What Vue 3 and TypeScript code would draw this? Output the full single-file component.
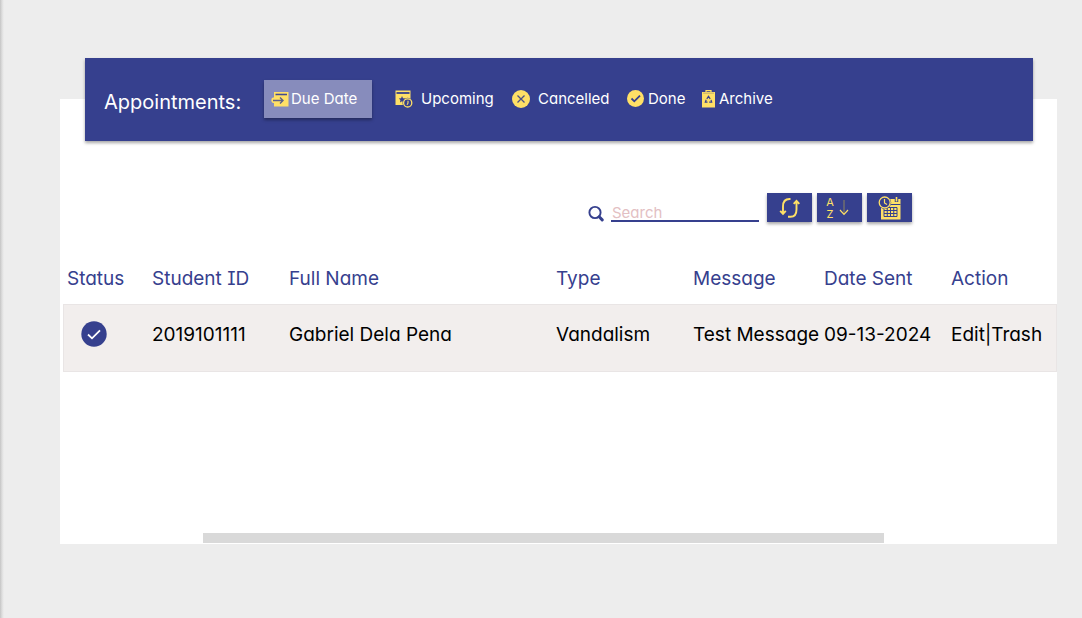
<script setup lang="ts">
import { ref } from 'vue'

type TabId = 'due' | 'upcoming' | 'cancelled' | 'done' | 'archive'

interface Appointment {
  studentId: string
  name: string
  type: string
  message: string
  date: string
}

const tabs: { id: TabId; label: string }[] = [
  { id: 'due', label: 'Due Date' },
  { id: 'upcoming', label: 'Upcoming' },
  { id: 'cancelled', label: 'Cancelled' },
  { id: 'done', label: 'Done' },
  { id: 'archive', label: 'Archive' },
]

const active = ref<TabId>('due')
const query = ref('')

const rows: Appointment[] = [
  {
    studentId: '2019101111',
    name: 'Gabriel Dela Pena',
    type: 'Vandalism',
    message: 'Test Message',
    date: '09-13-2024',
  },
]
</script>

<template>
  <main class="page">
    <section class="card">
      <header class="banner">
        <h1 class="title">Appointments:</h1>
        <nav class="tabs" aria-label="Appointment status">
          <button
            v-for="tab in tabs"
            :key="tab.id"
            type="button"
            :class="['tab', tab.id, { active: active === tab.id }]"
            @click="active = tab.id"
          >
            <svg v-if="tab.id === 'due'" width="18" height="16" viewBox="0 0 18 16" aria-hidden="true">
              <path d="M3 1H17.500V15.500H3Z" fill="#ffe066" />
              <path d="M4.500 3.500H16" stroke="#434b91" stroke-width="1.600" />
              <path d="M2 6.500H6.500L5.500 4.800H9.500L13.500 9.500L9.500 14H6.500V12H2Q.3 12 .3 9.300Q.3 6.500 2 6.500Z" fill="#ffe066" />
              <path d="M2 9.500H12M9 6.500L12 9.500L9 12.500" fill="none" stroke="#5d6188" stroke-width="1.400" />
            </svg>
            <svg v-else-if="tab.id === 'upcoming'" width="18" height="18" viewBox="0 0 18 18" aria-hidden="true">
              <path d="M.5 .5H15.500V15H.5Z" fill="#ffe066" />
              <path d="M1.500 3H14.500" stroke="#36408e" stroke-width="1.800" />
              <path d="M7 6L8 8.200L10.500 8.500L8.700 10L9 12.500L7 11.200L5 12.500L5.400 10L3.800 8.500L6.100 8.200Z" fill="#36408e" />
              <circle cx="12.700" cy="12.900" r="5.200" fill="#36408e" />
              <circle cx="12.700" cy="12.900" r="4.100" fill="none" stroke="#ffe066" stroke-width="1.300" />
              <path d="M13 10.800V13.200L12 14.700" fill="none" stroke="#ffe066" stroke-width="1.100" />
            </svg>
            <svg v-else-if="tab.id === 'cancelled'" width="18" height="18" viewBox="0 0 18 18" aria-hidden="true">
              <circle cx="9" cy="9" r="9" fill="#ffe066" />
              <path d="M5.500 5.500L12.500 12.500M12.500 5.500L5.500 12.500" stroke="#4c5184" stroke-width="1.300" />
            </svg>
            <svg v-else-if="tab.id === 'done'" width="17" height="17" viewBox="0 0 17 17" aria-hidden="true">
              <circle cx="8.500" cy="8.500" r="8.500" fill="#ffe066" />
              <path d="M4.500 8.500L7.300 11.300L13 5.600" fill="none" stroke="#36408e" stroke-width="1.800" />
            </svg>
            <svg v-else width="13" height="18" viewBox="0 0 13 18" aria-hidden="true">
              <path d="M0 2H13V17.500H0Z" fill="#ffe066" />
              <path d="M4 2.500V.7H9V2.500" fill="none" stroke="#ffe066" stroke-width="1.200" />
              <path d="M1 3.200H12" stroke="#b5a46f" stroke-width=".8" />
              <path d="M4.800 8.800L6.500 6.300L8.200 8.800M9 9.900L9.700 12.200H7.200M5.500 12.200H3.300L4.200 9.800" fill="none" stroke="#36408e" stroke-width="1.200" />
            </svg>
            <span>{{ tab.label }}</span>
          </button>
        </nav>
      </header>

      <div class="toolbar">
        <label class="search">
          <svg width="16" height="17" viewBox="0 0 16 17" aria-hidden="true">
            <circle cx="7" cy="7.500" r="5.600" fill="none" stroke="#36408e" stroke-width="1.900" />
            <path d="M11.200 11.800L14.200 14.900" stroke="#36408e" stroke-width="3" stroke-linecap="round" />
          </svg>
          <input v-model="query" type="text" placeholder="Search" aria-label="Search" />
        </label>
        <button class="tool" type="button" aria-label="Refresh">
          <svg width="22" height="22" viewBox="0 0 22 22" fill="none" stroke="#ffe066" stroke-width="1.900" aria-hidden="true">
            <path d="M11.500 2H10.500C6 2 4 5 4 9.500V16.500M1.200 13.800L4 16.800L6.800 13.800" />
            <path d="M9 19.800H11.500C15.500 19.800 17.500 17 17.500 12.500V4M14.700 6.800L17.500 3.800L20.300 6.800" />
          </svg>
        </button>
        <button class="tool sort" type="button" aria-label="Sort A to Z">
          <span class="letters"><span>A</span><span>Z</span></span>
          <svg width="10" height="16" viewBox="0 0 10 16" fill="none" aria-hidden="true">
            <path d="M5 0V14" stroke="#8d855f" stroke-width="1" />
            <path d="M1 10L5 14.300L9 10" stroke="#ffe066" stroke-width="1.200" />
          </svg>
        </button>
        <button class="tool" type="button" aria-label="Filter by date">
          <svg width="24" height="24" viewBox="0 0 24 24" aria-hidden="true">
            <path d="M3 3H22.500V23.500H3Z" fill="#ffe066" />
            <path d="M3 8.500H22.500" stroke="#36408e" stroke-width="1" />
            <path d="M18.500 1V6" stroke="#36408e" stroke-width="3.500" />
            <path d="M18.500 1V5.500" stroke="#ffe066" stroke-width="1.600" />
            <path d="M6 11.500H19V20.500H6ZM6 14.500H19M6 17.500H19M9.250 11.500V20.500M12.500 11.500V20.500M15.750 11.500V20.500" fill="none" stroke="#36408e" stroke-width="1" />
            <circle cx="6.700" cy="6.500" r="6.500" fill="#36408e" />
            <circle cx="6.700" cy="6.500" r="5.500" fill="none" stroke="#ffe066" stroke-width="1.300" />
            <path d="M6.500 3V7L9 8.500" fill="none" stroke="#ffe066" stroke-width="1.200" />
          </svg>
        </button>
      </div>

      <table class="list">
        <colgroup>
          <col class="c-status" /><col class="c-id" /><col /><col class="c-type" />
          <col class="c-message" /><col class="c-date" /><col class="c-action" />
        </colgroup>
        <thead>
          <tr>
            <th scope="col">Status</th>
            <th scope="col">Student ID</th>
            <th scope="col">Full Name</th>
            <th scope="col">Type</th>
            <th scope="col">Message</th>
            <th scope="col">Date Sent</th>
            <th scope="col">Action</th>
          </tr>
        </thead>
        <tbody>
          <tr v-for="row in rows" :key="row.studentId">
            <td class="status">
              <svg width="26" height="26" viewBox="0 0 26 26" role="img" aria-label="Done">
                <circle cx="13" cy="13" r="12.700" fill="#36408e" />
                <path d="M7 13.500L11 17.300L19 9.300" fill="none" stroke="#fff" stroke-width="1.800" />
              </svg>
            </td>
            <td>{{ row.studentId }}</td>
            <td>{{ row.name }}</td>
            <td>{{ row.type }}</td>
            <td>{{ row.message }}</td>
            <td>{{ row.date }}</td>
            <td><a href="#edit">Edit</a>|<a href="#trash">Trash</a></td>
          </tr>
        </tbody>
      </table>

      <div class="scrollbar"></div>
    </section>
  </main>
</template>

<style>
body {
  margin: 0;
}
</style>

<style scoped>
.page {
  box-sizing: border-box;
  min-height: 100vh;
  padding: 99px 25px 74px 60px;
  background: linear-gradient(90deg, #c4c4c4 0, #dedede 2px, #ededed 4px);
  font-family: Inter, "Open Sans", sans-serif;
  font-feature-settings: "cv11", "cv08";
  color: #000;
}

.card {
  display: flex;
  flex-direction: column;
  min-height: calc(100vh - 173px);
  background: #fff;
}

button {
  border: 0;
  padding: 0;
  font: inherit;
  font-feature-settings: inherit;
  cursor: pointer;
}

.banner {
  display: flex;
  align-items: center;
  min-height: 83px;
  margin: -41px 24px 0 25px;
  background: #36408e;
  box-shadow: 0 2px 3px rgba(0, 0, 0, 0.35);
  color: #fff;
}

.title {
  flex: 0 0 160px;
  margin: 4px 0 0 19px;
  font-size: 20px;
  line-height: 24px;
  font-weight: 400;
}

.tabs {
  display: grid;
  grid-template-columns: 131px 117px 115px 75px auto;
  align-items: center;
  margin-bottom: 2px;
}

.tab {
  display: flex;
  align-items: center;
  gap: 4px;
  height: 38px;
  background: none;
  color: #fff;
  font-size: 15px;
  line-height: 20px;
  white-space: nowrap;
}

.tab.due {
  gap: 2px;
  width: 108px;
  padding-left: 7px;
}

.tab.active {
  background: #878cbc;
  box-shadow: 0 2px 3px rgba(0, 0, 0, 0.35);
}

.tab.upcoming,
.tab.cancelled {
  gap: 8px;
}

.toolbar {
  display: flex;
  justify-content: flex-end;
  gap: 5px;
  margin: 52px 145px 0 0;
}

.search {
  display: flex;
  align-items: flex-end;
  gap: 7px;
  margin-right: 3px;
}

.search input {
  box-sizing: border-box;
  width: 148px;
  height: 20px;
  padding: 2px 1px 0;
  border: 0;
  border-bottom: 2px solid #36408e;
  border-radius: 0;
  outline: 0;
  background: none;
  font: inherit;
  font-feature-settings: inherit;
  font-size: 15px;
  line-height: 16px;
  color: #36408e;
}

.search input::placeholder {
  color: #e3c0c3;
  opacity: 1;
}

.tool {
  display: flex;
  align-items: center;
  justify-content: center;
  width: 45px;
  height: 29px;
  background: #36408e;
  box-shadow: 0 2px 3px rgba(0, 0, 0, 0.35);
}

.sort {
  gap: 5px;
  padding-right: 4px;
}

.letters {
  display: grid;
  color: #ffe066;
  font-size: 11px;
  line-height: 12px;
}

.list {
  align-self: stretch;
  width: calc(100% - 3px);
  margin: 36px 0 0 3px;
  border-collapse: separate;
  border-spacing: 0;
  table-layout: fixed;
  font-size: 19px;
  line-height: 24px;
}

.c-status { width: 85px; }
.c-id { width: 137px; }
.c-type { width: 137px; }
.c-message { width: 131px; }
.c-date { width: 127px; }
.c-action { width: 110px; }

th,
td {
  padding: 0 0 0 4px;
  text-align: left;
  font-weight: 400;
  white-space: nowrap;
}

th {
  padding-top: 9px;
  padding-bottom: 13px;
  color: #36408e;
}

td {
  height: 60px;
  padding-bottom: 6px;
  border: solid #e9e5e5;
  border-width: 1px 0;
  background: #f2eeed;
}

td:first-child {
  border-left-width: 1px;
}

td:last-child {
  border-right-width: 1px;
}

td.status {
  height: 58px;
  padding-left: 17px;
  padding-bottom: 8px;
}

td svg {
  display: block;
}

td a {
  color: inherit;
  text-decoration: none;
}

.scrollbar {
  width: 681px;
  max-width: 68.4%;
  height: 10px;
  margin: auto 0 1px 143px;
  background: #d9d9d9;
}
</style>
